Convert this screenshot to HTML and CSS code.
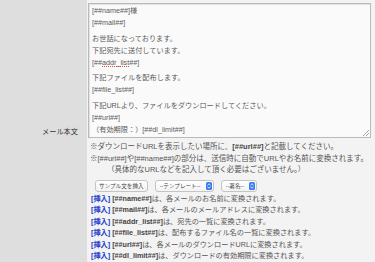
FILE: index.html
```html
<!DOCTYPE html>
<html lang="ja">
<head>
    <meta charset="UTF-8">
    <meta name="viewport" content="width=device-width, initial-scale=1.0">
    <title>メール本文</title>
    <link rel="stylesheet" href="styles.css">
</head>
<body>
    <table class="form-table">
        <tr>
            <th>メール本文</th>
            <td>
                <div class="mail-body" contenteditable="true" spellcheck="false">
                    <p>[##name##]様<br>[##mail##]</p>
                    <p>お世話になっております。<br>下記宛先に送付しています。<br>[##<span class="misspelt">addr_list</span>##]</p>
                    <p>下記ファイルを配布します。<br>[##file_list##]</p>
                    <p>下記URLより、ファイルをダウンロードしてください。<br>[##url##]<br>（有効期限：）[##dl_limit##]</p>
                </div>

                <div class="notes">
                    <p>※ダウンロードURLを表示したい場所に、<b>[##url##]</b>と記載してください。</p>
                    <p>※[##url##]や[##name##]の部分は、送信時に自動でURLやお名前に変換されます。</p>
                    <p class="indent">（具体的なURLなどを記入して頂く必要はございません。）</p>
                </div>

                <div class="tools">
                    <button type="button" class="btn">サンプル文を挿入</button>
                    <label class="select">
                        <select><option>--テンプレート--</option></select>
                        <svg viewBox="0 0 6 8" width="6" height="8"><rect width="6" height="8" rx="1.5" fill="#3b7cf0"/><path d="M1.5 3.2 3 1.8 4.5 3.2M1.5 4.8 3 6.2 4.5 4.8" fill="none" stroke="#fff" stroke-width="0.8"/></svg>
                    </label>
                    <label class="select">
                        <select><option>--署名--</option></select>
                        <svg viewBox="0 0 6 8" width="6" height="8"><rect width="6" height="8" rx="1.5" fill="#3b7cf0"/><path d="M1.5 3.2 3 1.8 4.5 3.2M1.5 4.8 3 6.2 4.5 4.8" fill="none" stroke="#fff" stroke-width="0.8"/></svg>
                    </label>
                </div>

                <ul class="tags">
                    <li><a href="#">[挿入]</a> <b>[##name##]</b>は、各メールのお名前に変換されます。</li>
                    <li><a href="#">[挿入]</a> <b>[##mail##]</b>は、各メールのメールアドレスに変換されます。</li>
                    <li><a href="#">[挿入]</a> <b>[##addr_list##]</b>は、宛先の一覧に変換されます。</li>
                    <li><a href="#">[挿入]</a> <b>[##file_list##]</b>は、配布するファイル名の一覧に変換されます。</li>
                    <li><a href="#">[挿入]</a> <b>[##url##]</b>は、各メールのダウンロードURLに変換されます。</li>
                    <li><a href="#">[挿入]</a> <b>[##dl_limit##]</b>は、ダウンロードの有効期限に変換されます。</li>
                </ul>
            </td>
        </tr>
    </table>
</body>
</html>
```

FILE: styles.css
```css
:root {
    --label-bg: #dedede;
    --cell-bg: #f3f3f3;
    --text-color: #555;
    --strong-color: #444;
    --link-color: #1d3ccb;
    --border-color: #bababa;
}

body {
    margin: 0;
    font-family: "Liberation Sans", "Noto Sans CJK JP", sans-serif;
    font-size: 7.2px;
    line-height: 11.5px;
    color: var(--text-color);
    background-color: var(--cell-bg);
}

p {
    margin: 0;
}

.form-table {
    width: 100%;
    border-collapse: collapse;
}

.form-table th {
    width: 78px;
    padding: 0 9px 0 0;
    background-color: var(--label-bg);
    color: #333;
    font-weight: normal;
    text-align: right;
    vertical-align: middle;
}

.form-table td {
    padding: 3px 4px 2px 1px;
    background-color: var(--cell-bg);
    vertical-align: top;
}

.mail-body {
    position: relative;
    height: 131px;
    padding: 1px 3px;
    background-color: #fafafa;
    border: 1px solid var(--border-color);
    box-shadow: inset 1px 1px 1px rgba(0, 0, 0, 0.1);
    line-height: 12px;
    color: #5a5a5a;
    outline: none;
    overflow: hidden;
}

.mail-body p + p {
    margin-top: 3.6px;
}

.mail-body::after {
    content: "";
    position: absolute;
    right: 1px;
    bottom: 1px;
    width: 6px;
    height: 6px;
    background: linear-gradient(135deg, transparent 48%, #aaa 48%, #aaa 56%, transparent 56%, transparent 74%, #aaa 74%, #aaa 82%, transparent 82%);
}

.misspelt {
    text-decoration: underline dotted #e5483f;
    text-decoration-thickness: 1px;
    text-underline-offset: 1px;
}

.notes {
    margin-top: 3px;
    padding-left: 2px;
    font-size: 7.5px;
}

.notes b {
    color: var(--strong-color);
}

.indent {
    padding-left: 17px;
}

.tools {
    display: flex;
    align-items: center;
    gap: 7px;
    margin-top: 4px;
    padding-left: 7px;
    height: 12px;
}

.btn {
    height: 12px;
    padding: 0 3px;
    font-family: inherit;
    font-size: 5.6px;
    line-height: 10px;
    color: #444;
    background: linear-gradient(#fff, #f1f1f1);
    border: 1px solid #c4c4c4;
    border-radius: 3px;
}

.select {
    position: relative;
    display: inline-flex;
    align-items: center;
}

.select select {
    appearance: none;
    height: 12px;
    padding: 0 11px 0 4px;
    font-family: inherit;
    font-size: 5.6px;
    line-height: 10px;
    color: #444;
    background: linear-gradient(#fff, #f3f3f3);
    border: 1px solid #c4c4c4;
    border-radius: 3px;
}

.select svg {
    position: absolute;
    right: 2px;
    top: 2px;
    pointer-events: none;
}

.tags {
    list-style: none;
    margin: 1px 0 0;
    padding-left: 3px;
}

.tags a {
    color: var(--link-color);
    font-weight: bold;
    text-decoration: none;
}

.tags b {
    color: var(--strong-color);
}
```
